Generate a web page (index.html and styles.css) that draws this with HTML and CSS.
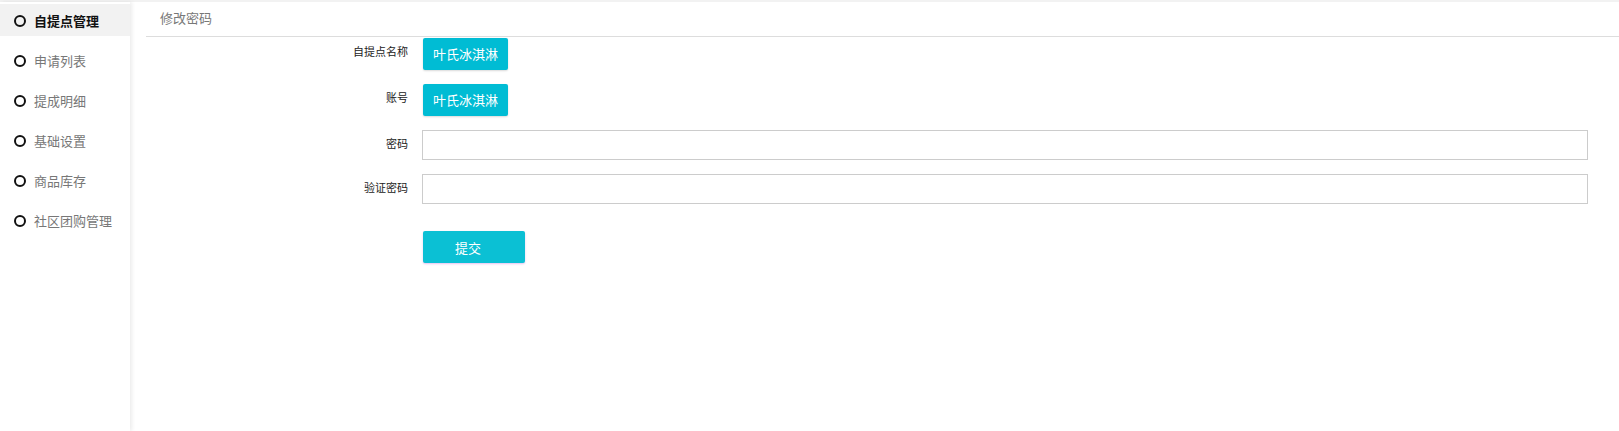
FILE: index.html
```html
<!DOCTYPE html>
<html lang="zh-CN">
<head>
<meta charset="utf-8">
<title>修改密码</title>
<link rel="stylesheet" href="styles.css">
</head>
<body>
<div class="page">
  <aside class="sidebar">
    <ul class="menu">
      <li class="menu-item active"><span class="dot"></span><span>自提点管理</span></li>
      <li class="menu-item"><span class="dot"></span><span>申请列表</span></li>
      <li class="menu-item"><span class="dot"></span><span>提成明细</span></li>
      <li class="menu-item"><span class="dot"></span><span>基础设置</span></li>
      <li class="menu-item"><span class="dot"></span><span>商品库存</span></li>
      <li class="menu-item"><span class="dot"></span><span>社区团购管理</span></li>
    </ul>
  </aside>
  <main class="main">
    <div class="header">修改密码</div>
    <form class="form">
      <div class="row">
        <label class="label">自提点名称</label>
        <div class="control"><span class="tag">叶氏冰淇淋</span></div>
      </div>
      <div class="row">
        <label class="label">账号</label>
        <div class="control"><span class="tag">叶氏冰淇淋</span></div>
      </div>
      <div class="row">
        <label class="label">密码</label>
        <div class="control"><input class="input" type="password"></div>
      </div>
      <div class="row">
        <label class="label">验证密码</label>
        <div class="control"><input class="input" type="password"></div>
      </div>
      <div class="row submit-row">
        <span></span>
        <div class="control"><button type="button" class="submit">提交</button></div>
      </div>
    </form>
  </main>
</div>
</body>
</html>
```

FILE: styles.css
```css
* { box-sizing: border-box; }
html, body {
  margin: 0;
  padding: 0;
  background: #fff;
  font-family: "Noto Sans CJK SC", "Noto Sans", sans-serif;
}
.page {
  display: flex;
  min-height: 431px;
  border-top: 2px solid #f2f2f2;
}
.sidebar {
  width: 130px;
  flex: none;
  background: #fff;
  box-shadow: 2px 0 4px rgba(0,0,0,0.08);
  padding-top: 2px;
}
.menu {
  list-style: none;
  margin: 0;
  padding: 0;
}
.menu-item {
  display: flex;
  align-items: center;
  height: 32px;
  margin-bottom: 8px;
  padding-left: 14px;
  font-size: 13px;
  color: #777;
}
.menu-item.active {
  background: #f2f2f2;
  color: #111;
  font-weight: bold;
}
.dot {
  width: 12px;
  height: 12px;
  border: 2px solid #111;
  border-radius: 50%;
  margin-right: 8px;
  margin-top: 1px;
  flex: none;
}
.main {
  flex: 1;
  margin-left: 16px;
}
.header {
  height: 35px;
  line-height: 32px;
  padding-left: 14px;
  font-size: 13px;
  color: #777;
  border-bottom: 1px solid #ddd;
}
.form {
  display: flex;
  flex-direction: column;
  gap: 14px;
  padding-top: 1px;
}
.row {
  display: grid;
  grid-template-columns: 262px 1166px;
  column-gap: 14px;
}
.label {
  text-align: right;
  font-size: 11px;
  line-height: 16px;
  padding-top: 5px;
  color: #222;
}
.tag {
  display: inline-block;
  height: 32px;
  line-height: 32px;
  padding: 0 10px;
  margin-left: 1px;
  background: #00bcd4;
  color: #fff;
  font-size: 13px;
  border-radius: 2px;
  box-shadow: 0 1px 2px rgba(0,0,0,0.15);
}
.input {
  display: block;
  width: 1166px;
  height: 30px;
  border: 1px solid #ccc;
  outline: none;
  padding: 0 6px;
}
.submit-row { margin-top: 13px; }
.submit {
  width: 102px;
  height: 32px;
  margin-left: 1px;
  padding: 0 0 0 32px;
  text-align: left;
  border: none;
  border-radius: 2px;
  background: #0bc0d4;
  color: #fff;
  font-family: inherit;
  font-size: 13px;
  box-shadow: 0 1px 2px rgba(200,120,220,0.45);
}
```
